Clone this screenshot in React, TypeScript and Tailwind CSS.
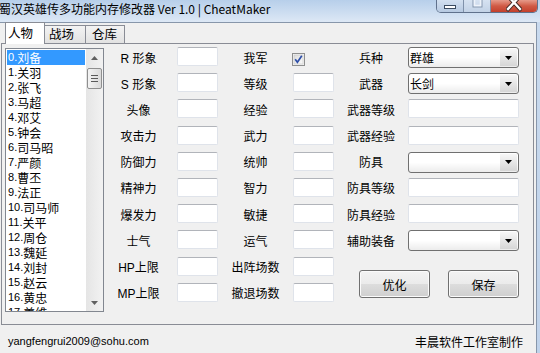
const people = [
  '刘备', '关羽', '张飞', '马超', '邓艾', '钟会', '司马昭', '严颜', '曹丕',
  '法正', '司马师', '关平', '周仓', '魏延', '刘封', '赵云', '黄忠', '姜维',
];

const col1 = ['R 形象', 'S 形象', '头像', '攻击力', '防御力', '精神力', '爆发力', '士气', 'HP上限', 'MP上限'];
const col2 = ['我军', '等级', '经验', '武力', '统帅', '智力', '敏捷', '运气', '出阵场数', '撤退场数'];
const col3: { label: string; kind: 'combo' | 'input'; value?: string }[] = [
  { label: '兵种', kind: 'combo', value: '群雄' },
  { label: '武器', kind: 'combo', value: '长剑' },
  { label: '武器等级', kind: 'input' },
  { label: '武器经验', kind: 'input' },
  { label: '防具', kind: 'combo', value: '' },
  { label: '防具等级', kind: 'input' },
  { label: '防具经验', kind: 'input' },
  { label: '辅助装备', kind: 'combo', value: '' },
];

function TitleBar() {
  return (
    <div className="flex h-[22px] bg-gradient-to-b from-[#b7cfea] to-[#dde8f5]">
      <span className="ml-[-1px] leading-[18px] text-[12px] font-['Noto_Sans_CJK_SC',sans-serif] whitespace-nowrap">
        蜀汉英雄传多功能内存修改器 Ver 1.0 | CheatMaker
      </span>
      <div className="ml-auto mr-[2px] flex self-start h-[13px] rounded-b-[5px] border border-t-0 border-[#5f718c] overflow-hidden">
        <div className="w-[27px] flex justify-center bg-gradient-to-b from-[#d3e0f0] to-[#b6c9e1] border-r border-[#7f91aa]">
          <div className="mt-[5px] w-[12px] h-[4px] bg-white border border-[#3b4b60]" />
        </div>
        <div className="w-[27px] flex justify-center bg-gradient-to-b from-[#d6e2f1] to-[#c2d2e6] border-r border-[#7f91aa]">
          <svg width="11" height="10" viewBox="0 0 11 10">
            <rect x="1" y="-3" width="9" height="10" fill="none" stroke="#8797ad" strokeWidth="1" />
            <rect x="2.5" y="-2" width="6" height="7.5" fill="none" stroke="#eef3fa" strokeWidth="1.5" />
          </svg>
        </div>
        <div className="w-[46px] flex justify-center bg-gradient-to-b from-[#e59a8a] via-[#d05a45] to-[#c2402d]">
          <svg width="16" height="12" viewBox="0 0 16 12">
            <path d="M2 -4 L14 9 M14 -4 L2 9" stroke="#3d2520" strokeWidth="4.2" strokeLinecap="square" />
            <path d="M2 -4 L14 9 M14 -4 L2 9" stroke="#ffffff" strokeWidth="2.4" strokeLinecap="square" />
          </svg>
        </div>
      </div>
    </div>
  );
}

function Tabs() {
  return (
    <div className="flex items-start h-[21px] -mt-px pl-[5px] text-[12.5px] font-['Noto_Sans_CJK_SC',sans-serif]">
      <div className="relative z-10 h-[22px] w-[40px] pl-[2px] flex items-center bg-white border border-b-0 border-[#898c95]">
        人物
      </div>
      <div className="mt-[3px] h-[18px] w-[41px] pl-[4px] flex items-center bg-gradient-to-b from-[#f3f3f3] to-[#e2e2e2] border border-l-0 border-b-0 border-[#898c95]">
        战场
      </div>
      <div className="mt-[3px] h-[18px] w-[39px] pl-[6px] flex items-center bg-gradient-to-b from-[#f3f3f3] to-[#e2e2e2] border border-l-0 border-b-0 border-[#898c95]">
        仓库
      </div>
    </div>
  );
}

function Arrow({ up }: { up?: boolean }) {
  return (
    <svg width="7" height="4" viewBox="0 0 7 4">
      <path d={up ? 'M0 4 L3.5 0 L7 4 Z' : 'M0 0 L7 0 L3.5 4 Z'} fill="#606060" />
    </svg>
  );
}

function PeopleList() {
  return (
    <div className="ml-[3px] mt-[4px] w-[99px] h-[264px] flex border border-[#828790] bg-white">
      <div className="flex-1 p-[1px] overflow-hidden">
        {people.map((name, i) => (
          <div
            key={name}
            className={`h-[15px] pl-[1px] flex items-center whitespace-nowrap text-[12px] leading-[15px] ${
              i === 0 ? 'bg-[#3399ff] text-white' : 'text-black'
            }`}
          >
            <span className="text-[11px]">{i}.</span>
            <span className="font-['Noto_Sans_CJK_SC',sans-serif]">{name}</span>
          </div>
        ))}
      </div>
      <div className="w-[17px] flex flex-col bg-gradient-to-r from-[#e5e5e5] to-[#f2f2f2]">
        <div className="h-[17px] flex items-center justify-center">
          <Arrow up />
        </div>
        <div className="mt-[2px] mx-[1px] h-[21px] rounded-[2px] border border-[#8f8f8f] bg-gradient-to-r from-[#f4f4f4] to-[#dadada] flex flex-col items-center justify-center gap-[2px]">
          <div className="w-[7px] h-[1px] bg-[#5a5a5a]" />
          <div className="w-[7px] h-[1px] bg-[#5a5a5a]" />
          <div className="w-[7px] h-[1px] bg-[#5a5a5a]" />
        </div>
        <div className="mt-auto h-[17px] flex items-center justify-center">
          <Arrow />
        </div>
      </div>
    </div>
  );
}

function Label({ text, className = '' }: { text: string; className?: string }) {
  return (
    <div className={`h-[19px] pt-[4px] flex items-center justify-center whitespace-nowrap leading-none font-['Liberation_Sans','Noto_Sans_CJK_SC',sans-serif] ${className}`}>
      {text}
    </div>
  );
}

function TextBox({ wide }: { wide?: boolean }) {
  return (
    <div
      className={`h-[19px] ${wide ? 'w-[111px]' : 'w-[41px]'} bg-white rounded-[2px] border border-[#dfe3ea] border-t-[#b1b4ba]`}
    />
  );
}

function Combo({ value }: { value?: string }) {
  return (
    <div className="h-[21px] w-[111px] flex rounded-[3px] border border-[#707070] bg-gradient-to-b from-white via-white to-[#ececec]">
      <div className="flex-1 pl-[1px] flex items-center leading-none font-['Noto_Sans_CJK_SC',sans-serif]">{value}</div>
      <div className="my-[1px] mr-[1px] w-[17px] flex items-center justify-center bg-gradient-to-b from-[#f7f7f7] to-[#d6d6d6]">
        <svg width="7" height="4" viewBox="0 0 7 4">
          <path d="M0 0 L7 0 L3.5 4 Z" fill="#000" />
        </svg>
      </div>
    </div>
  );
}

function CheckBox() {
  return (
    <div className="mt-[6px] ml-[-1px]">
      <svg width="13" height="13" viewBox="0 0 13 13">
        <defs>
          <linearGradient id="cb" x1="0" y1="0" x2="1" y2="1">
            <stop offset="0" stopColor="#dcdcdc" />
            <stop offset="1" stopColor="#fbfbfb" />
          </linearGradient>
        </defs>
        <rect x="0.5" y="0.5" width="12" height="12" fill="#f4f4f4" stroke="#8e8f8f" />
        <rect x="2" y="2" width="9" height="9" fill="url(#cb)" stroke="#c6c6c6" strokeWidth="0.6" />
        <path d="M3.2 6.2 L5.4 9.2 L9.8 2.8" fill="none" stroke="#2e4fa8" strokeWidth="1.7" />
      </svg>
    </div>
  );
}

function WinButton({ text }: { text: string }) {
  return (
    <div className="h-[28px] w-[71px] flex items-center justify-center pt-[2px] rounded-[3px] border border-[#707070] shadow-[inset_0_0_0_1px_#fbfbfb] bg-[linear-gradient(to_bottom,#f3f3f3,#ebebeb_50%,#dddddd_50%,#cfcfcf)] font-['Noto_Sans_CJK_SC',sans-serif] leading-none">
      {text}
    </div>
  );
}

function Form() {
  return (
    <div className="mt-[3px] grid grid-cols-[73px_41px_75px_41px_74px_111px] grid-rows-[repeat(10,26.2px)] items-start">
      <div className="col-start-5 col-span-2 row-start-9 row-span-2 flex pl-[25px] pt-[13px] gap-[18px]">
        <WinButton text="优化" />
        <WinButton text="保存" />
      </div>
      {col1.map((l1, i) => {
        const c3 = col3[i];
        return [
          <Label key={`a${i}`} text={l1} className="pr-[4px]" />,
          <TextBox key={`b${i}`} />,
          <Label key={`c${i}`} text={col2[i]} />,
          i === 0 ? <CheckBox key={`d${i}`} /> : <TextBox key={`d${i}`} />,
          c3 ? <Label key={`e${i}`} text={c3.label} /> : null,
          c3 ? (
            c3.kind === 'combo' ? <Combo key={`f${i}`} value={c3.value} /> : <TextBox key={`f${i}`} wide />
          ) : null,
        ];
      })}
    </div>
  );
}

export default function App() {
  return (
    <div className="w-[540px] h-[353px] overflow-hidden bg-[#f0f0f0] text-black text-[12px] font-['Liberation_Sans','Noto_Sans_CJK_SC',sans-serif]">
      <TitleBar />
      <div className="flex h-[331px]">
        <div className="w-[537px] flex flex-col border-t border-r border-[#8796aa]">
          <Tabs />
          <div className="ml-[1px] w-[533px] h-[282px] flex items-start border border-[#898c95]">
            <PeopleList />
            <Form />
          </div>
          <div className="flex h-[28px] items-center justify-between pt-[5px] pl-[8px] pr-[13px]">
            <span className="text-[11px]">yangfengrui2009@sohu.com</span>
            <span className="font-['Noto_Sans_CJK_SC',sans-serif]">丰晨软件工作室制作</span>
          </div>
        </div>
        <div className="flex-1 bg-gradient-to-b from-[#c9daee] to-[#bfd2ea]" />
      </div>
    </div>
  );
}
